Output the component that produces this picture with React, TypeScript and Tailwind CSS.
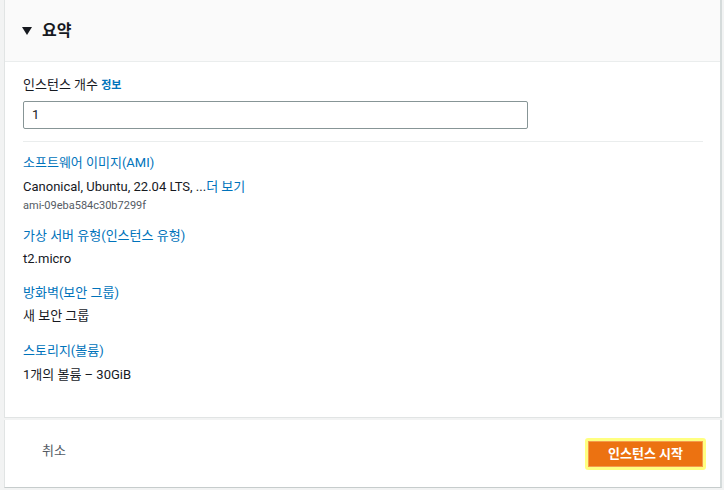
const font = { fontFamily: 'Roboto, "Noto Sans CJK KR", sans-serif' }

function Field({ label, children, mt }: { label: string; children: React.ReactNode; mt: string }) {
  return (
    <div className={mt}>
      <div className="text-[13px] leading-[20px] text-[#0073bb]">{label}</div>
      {children}
    </div>
  )
}

export default function App() {
  return (
    <div
      className="w-[724px] h-[490px] bg-[#f2f3f3] pl-[4px] pr-[2px] overflow-hidden text-[#16191f]"
      style={font}
    >
      {/* 요약 카드 */}
      <div className="w-[718px] h-[418px] bg-white border-l border-r-2 border-b border-[#e1e4e4] border-r-[#d5dbdb] flex flex-col">
        <div className="h-[62px] bg-[#fafafa] border-b border-[#eaeded] flex items-center pl-[17px] gap-[10px]">
          <svg width="10" height="8" viewBox="0 0 10 8" className="mt-[1px]">
            <path d="M0 0 H10 L5 8 Z" fill="#16191f" />
          </svg>
          <span className="text-[16px] font-bold leading-none">요약</span>
        </div>

        <div className="px-[18px] pt-[13px]">
          <div className="text-[13px] leading-[20px] text-[#16191f]">
            인스턴스 개수 <span className="text-[11px] font-bold text-[#0073bb]">정보</span>
          </div>
          <div className="mt-[5px] w-[505px] h-[28px] border border-[#879596] rounded-[2px] flex items-center pl-[8px] text-[13px]">
            1
          </div>
          <div className="mt-[12px] h-px bg-[#eaeded] w-[680px]" />

          <Field label="소프트웨어 이미지(AMI)" mt="mt-[11px]">
            <div className="mt-[4px] text-[13px] leading-[20px]">
              Canonical, Ubuntu, 22.04 LTS, ...<span className="text-[#0073bb]">더 보기</span>
            </div>
            <div className="mt-px text-[11px] leading-[16px] text-[#545b64]">ami-09eba584c30b7299f</div>
          </Field>

          <Field label="가상 서버 유형(인스턴스 유형)" mt="mt-[12px]">
            <div className="mt-[3px] text-[13px] leading-[20px]">t2.micro</div>
          </Field>

          <Field label="방화벽(보안 그룹)" mt="mt-[14px]">
            <div className="mt-[3px] text-[13px] leading-[20px]">새 보안 그룹</div>
          </Field>

          <Field label="스토리지(볼륨)" mt="mt-[15px]">
            <div className="mt-[4px] text-[13px] leading-[20px]">1개의 볼륨 – 30GiB</div>
          </Field>
        </div>
      </div>

      {/* 하단 버튼 */}
      <div className="mt-[2px] w-[718px] h-[68px] bg-white border-l border-r-2 border-b border-[#e1e4e4] border-r-[#d5dbdb] border-b-[#c6cccc] flex items-center justify-between pl-[37px] pr-[14px]">
        <button className="text-[13px] text-[#545b64] mb-[6px]">취소</button>
        <div className="p-[3px] bg-[#ffff80] rounded-[3px]">
          <button className="w-[115px] h-[26px] bg-[#ec7211] border border-[#f29b4e] text-white text-[13px] font-bold flex items-center justify-center">
            인스턴스 시작
          </button>
        </div>
      </div>
    </div>
  )
}
